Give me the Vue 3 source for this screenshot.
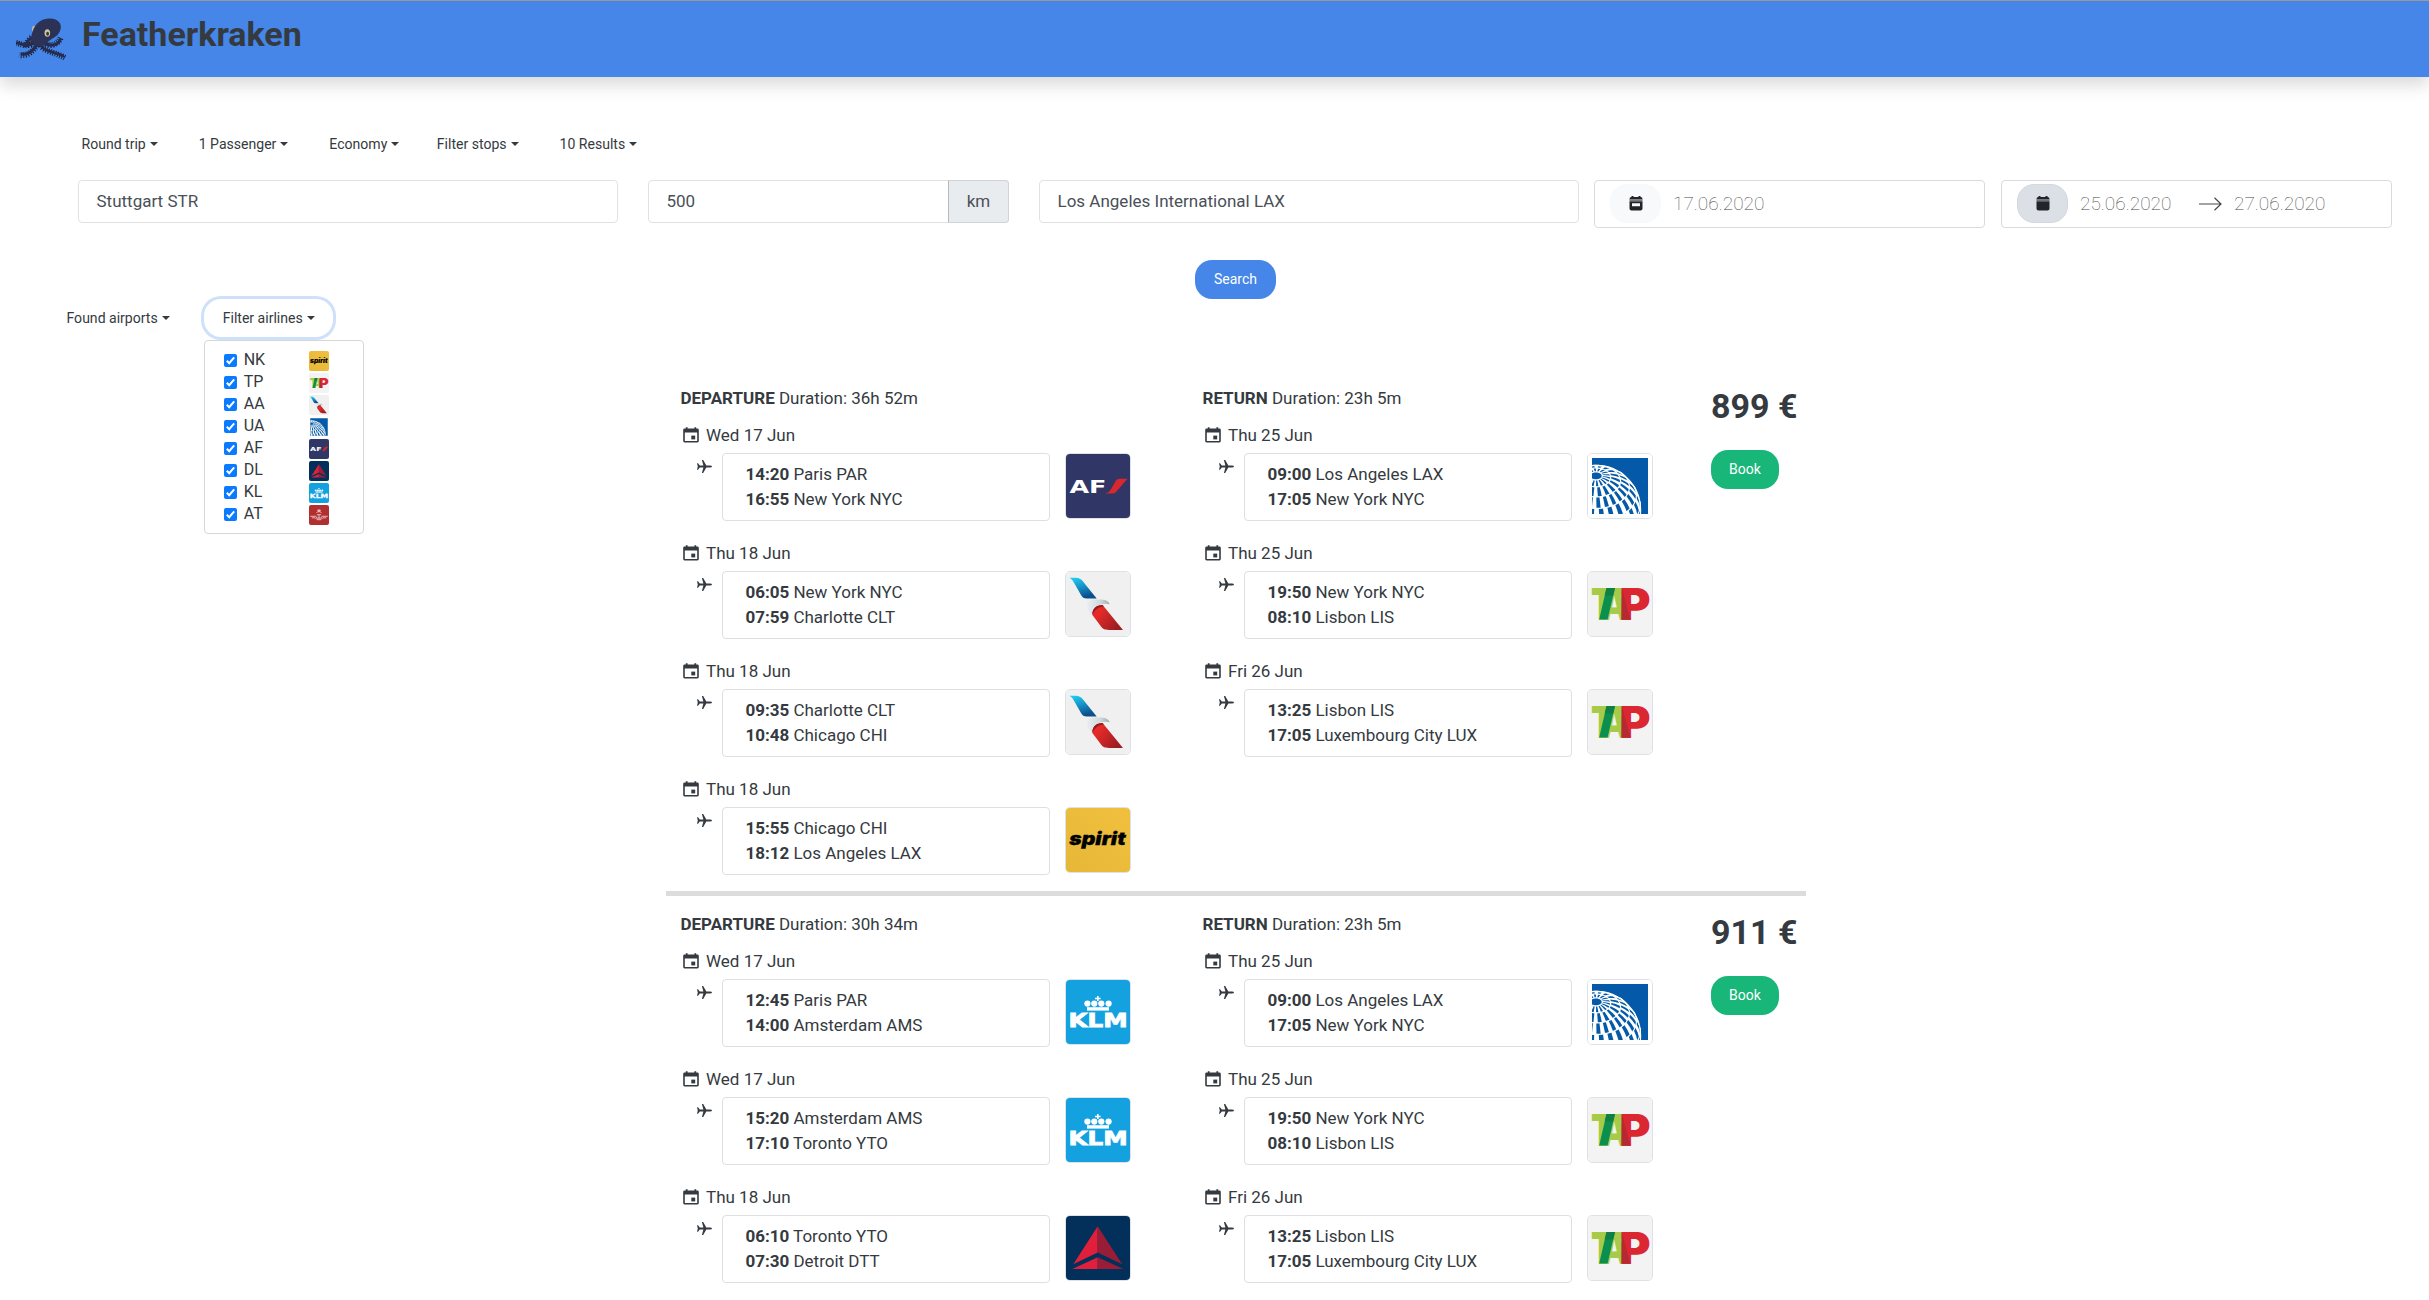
<script setup>
const options = ['Round trip', '1 Passenger', 'Economy', 'Filter stops', '10 Results']
const airlines = ['NK', 'TP', 'AA', 'UA', 'AF', 'DL', 'KL', 'AT']

const leg = (date, dep, from, arr, to, airline) => ({ date, dep, from, arr, to, airline })
const back = [
  leg('Thu 25 Jun', '09:00', 'Los Angeles LAX', '17:05', 'New York NYC', 'UA'),
  leg('Thu 25 Jun', '19:50', 'New York NYC', '08:10', 'Lisbon LIS', 'TP'),
  leg('Fri 26 Jun', '13:25', 'Lisbon LIS', '17:05', 'Luxembourg City LUX', 'TP'),
]
const trips = [
  {
    price: '899 €',
    routes: [
      {
        title: 'DEPARTURE',
        duration: '36h 52m',
        legs: [
          leg('Wed 17 Jun', '14:20', 'Paris PAR', '16:55', 'New York NYC', 'AF'),
          leg('Thu 18 Jun', '06:05', 'New York NYC', '07:59', 'Charlotte CLT', 'AA'),
          leg('Thu 18 Jun', '09:35', 'Charlotte CLT', '10:48', 'Chicago CHI', 'AA'),
          leg('Thu 18 Jun', '15:55', 'Chicago CHI', '18:12', 'Los Angeles LAX', 'NK'),
        ],
      },
      { title: 'RETURN', duration: '23h 5m', legs: back },
    ],
  },
  {
    price: '911 €',
    routes: [
      {
        title: 'DEPARTURE',
        duration: '30h 34m',
        legs: [
          leg('Wed 17 Jun', '12:45', 'Paris PAR', '14:00', 'Amsterdam AMS', 'KL'),
          leg('Wed 17 Jun', '15:20', 'Amsterdam AMS', '17:10', 'Toronto YTO', 'KL'),
          leg('Thu 18 Jun', '06:10', 'Toronto YTO', '07:30', 'Detroit DTT', 'DL'),
        ],
      },
      { title: 'RETURN', duration: '23h 5m', legs: back },
    ],
  },
]

// Globe graticule: orthographic projection of a sphere whose pole is tilted towards the viewer.
const rad = Math.PI / 180
const cx = 8, cy = 56, R = 45
const tilt = 50 * rad
function project(theta, phi) {
  const t = theta * rad, f = phi * rad
  const a = Math.sin(t) * Math.cos(f), b = Math.sin(t) * Math.sin(f), c = Math.cos(t)
  const y = c * Math.sin(tilt) + b * Math.cos(tilt)
  const z = c * Math.cos(tilt) - b * Math.sin(tilt)
  return { x: (cx + R * a).toFixed(1), y: (cy - R * y).toFixed(1), z }
}
const poly = (pts) => 'M' + pts.map((p) => p.x + ' ' + p.y).join('L')
let cells = ''
let rings = ''
const bands = [8, 19, 33, 48, 64, 81, 98]
bands.slice(0, -1).forEach((t0, k) => {
  const t1 = bands[k + 1]
  const step = k < 2 ? 20 : 15
  const w = step * 0.52
  for (let f = -120; f < 120; f += step) {
    const s = f + k * 4
    const m = (t0 + t1) / 2
    const pts = [
      project(t0, s), project(t0, s + w / 2), project(t0, s + w),
      project(m, s + w), project(t1, s + w), project(t1, s + w / 2), project(t1, s), project(m, s),
    ]
    if (pts.every((p) => p.z > -0.02)) cells += poly(pts) + 'Z'
  }
  let run = []
  for (let f = -130; f <= 130; f += 5) {
    const p = project(t0, f)
    if (p.z > 0) run.push(p)
    else if (run.length) { rings += poly(run); run = [] }
  }
  if (run.length) rings += poly(run)
})

const art = {
  AF: `<rect width="64" height="64" fill="#303766"/>
    <text x="3.4" y="39.4" font-family="DejaVu Sans" font-weight="700" font-size="18" fill="#fff" textLength="37" lengthAdjust="spacingAndGlyphs">AF</text>
    <path d="M39.3 39.5C42.5 38.8 43.6 37.5 45.2 34.8L49.3 27.8C50.6 25.6 51.6 24.9 53.6 24.8H61.5L50.4 37.6C49.2 39 48.4 39.5 46.8 39.5Z" fill="#d9272e"/>`,
  AA: `<rect width="64" height="64" fill="#f0f0f0"/>
    <path d="M3.5 5.8H9.5C13 5.8 15 7 17 9.4L30.7 26.6H20.8C18 26.6 16.2 25.4 15 23L9 12.5C7.5 9.5 6 7.5 3.5 5.8Z" fill="url(#g-blue)"/>
    <path d="M26 42.5C22 39.5 20.6 36 21 32C21.5 28.6 24.5 27.6 28 27.6H34C38.5 27.6 42.5 29 43.7 32.2C40.6 31.2 37.5 31.7 34 32.7C29.5 34.2 26 37.5 26 42.5Z" fill="url(#g-beak)"/>
    <path d="M26.4 43C26 37 30 33 36.6 33L57 58H43C38.5 58 36.5 57 34.3 53.6Z" fill="url(#g-red)"/>
    <path d="M26.4 43C26 37 30 33 36.6 33L37.8 34.6C32.5 35 28.5 38 26.4 43Z" fill="#951b20"/>`,
  NK: `<rect width="64" height="64" fill="url(#g-yellow)"/>
    <text x="3.2" y="36.9" font-family="Inter, Roboto" font-weight="900" font-style="italic" font-size="17.6" fill="#000" stroke="#000" stroke-width="0.3" textLength="56.5" lengthAdjust="spacingAndGlyphs">spirit</text>`,
  KL: `<rect width="64" height="64" fill="#13a1df"/>
    <path d="M31 16h1.6v1.7h2v1.6h-2V21H31v-1.7h-2v-1.6h2z" fill="#fff"/>
    <g fill="#fff"><circle cx="21.4" cy="23.6" r="3.1"/><circle cx="28.3" cy="23.6" r="3.1"/><circle cx="35.3" cy="23.6" r="3.1"/><circle cx="42.6" cy="23.6" r="3.1"/><rect x="21" y="27.2" width="22" height="3.4"/></g>
    <text x="2.6" y="47.4" font-family="DejaVu Sans" font-weight="700" font-size="18.6" fill="#fff" stroke="#fff" stroke-width="0.8" textLength="59" lengthAdjust="spacingAndGlyphs">KLM</text>`,
  DL: `<rect width="64" height="64" fill="#03305b"/>
    <path d="M31.7 10.3L7.3 48.2L31.7 36.4ZM31.7 41.3L6.3 53H31.7Z" fill="#e01f3a"/>
    <path d="M31.7 10.3L56.2 48.2L31.7 36.4ZM31.7 41.3L57.4 53H31.7Z" fill="#991d36"/>`,
  UA: `<rect width="64" height="64" fill="#fff"/><rect x="4" y="4" width="56" height="56" fill="#0459a8"/>
    <g clip-path="url(#c-square)"><path d="${cells}" fill="#fff"/><path d="${rings}" fill="none" stroke="#fff" stroke-width="1.2"/>
    <circle cx="8" cy="56" r="44.6" fill="none" stroke="#fff" stroke-width="1.2"/></g>`,
  TP: `<rect width="64" height="64" fill="#f3f3f3"/>
    <g font-family="Inter, Roboto" font-weight="900" font-size="43.5">
    <text x="3" y="47.6" fill="#a5cb48" textLength="22" lengthAdjust="spacingAndGlyphs">T</text>
    <text x="12" y="47.6" fill="#a5cb48" textLength="29" lengthAdjust="spacingAndGlyphs">A</text>
    <path d="M20 16H34V23H20Z" fill="#a5cb48"/>
    <path d="M18.5 16H27L19.6 47.6H11.2Z" fill="#0b8f4e"/>
    <path d="M18.5 16H27L25.2 23.6H16.6Z" fill="#0f7f46"/>
    <text x="31.6" y="47.6" fill="#da2731" textLength="31" lengthAdjust="spacingAndGlyphs">P</text>
    <path d="M33.7 16L42.3 47.6H33.4Z" fill="#b52a30"/></g>`,
  AT: `<rect width="64" height="64" fill="#b22f30"/>
    <g fill="none" stroke="#e9c3c3" stroke-width="3"><path d="M4 36H22L26 42H38L42 36H60M9 41H20L26 47H38L44 41H55"/>
    <path d="M32 13V24M26 17H38M24 24L32 20L40 24M25 31H39M32 31V44"/></g>`,
}
</script>

<template>
  <div class="page">
    <svg class="defs" width="0" height="0" aria-hidden="true">
      <defs>
        <linearGradient id="g-blue" x1="0" y1="0" x2="0.4" y2="1">
          <stop offset="0" stop-color="#1fd3f7" /><stop offset="0.5" stop-color="#1795c8" /><stop offset="1" stop-color="#0b4f8c" />
        </linearGradient>
        <linearGradient id="g-red" x1="0" y1="0" x2="1" y2="0.6">
          <stop offset="0.3" stop-color="#e42b28" /><stop offset="1" stop-color="#9c1d22" />
        </linearGradient>
        <linearGradient id="g-beak" x1="0" y1="0" x2="1" y2="0">
          <stop offset="0" stop-color="#e9eef1" /><stop offset="0.6" stop-color="#cfd8dc" /><stop offset="1" stop-color="#9aa9b1" />
        </linearGradient>
        <linearGradient id="g-yellow" x1="1" y1="0" x2="0" y2="1">
          <stop offset="0" stop-color="#f0c03d" /><stop offset="1" stop-color="#e7b739" />
        </linearGradient>
        <clipPath id="c-square"><rect x="4" y="4" width="56" height="56" /></clipPath>
      </defs>
      <symbol id="ico-cal" viewBox="0 0 16 16">
        <path d="M2.8 0.2H4.6V1.5H11.4V0.2H13.2V1.5H14.4Q15.8 1.5 15.8 2.9V14.1Q15.8 15.5 14.4 15.5H1.6Q0.2 15.5 0.2 14.1V2.9Q0.2 1.5 1.6 1.5H2.8ZM1.8 5.4V13.9H14.2V5.4Z" fill-rule="evenodd" fill="#343a40" />
        <rect x="8.3" y="8.6" width="3.9" height="3.8" fill="#343a40" />
      </symbol>
      <symbol id="ico-plane" viewBox="0 0 15 13">
        <path d="M0 3.2H1L2.8 5.5H6.4L4.9 0H6.2L9.3 5.5H13Q15 5.7 15 6.5T13 7.5H9.3L6.2 13H4.9L6.4 7.5H2.8L1 9.8H0L0.8 6.5Z" fill="#343a40" />
      </symbol>
    </svg>

    <header class="topbar">
      <svg class="kraken" viewBox="0 0 50 42" width="50" height="42">
        <g fill="none">
          <g stroke="#151a2c" stroke-width="6" stroke-dasharray="0.9 1.5">
            <path d="M20 21C15 30 8 27 0 25" /><path d="M22 25C17 34 12 38 3 37" /><path d="M24 25C26 34 40 34 49 40" /><path d="M26 23C34 30 42 27 45 19" /><path d="M20 19C14 19 12 22 9 30" />
          </g>
          <g stroke="#272c4e" stroke-width="3" stroke-linecap="round">
            <path d="M20 21C15 30 8 27 2 25" /><path d="M22 25C17 34 12 37 6 36" /><path d="M24 25C26 34 40 34 47 38" /><path d="M26 23C34 30 42 27 44 22" /><path d="M20 19C14 19 12 22 9 28" />
          </g>
        </g>
        <ellipse cx="18" cy="11" rx="2" ry="3.2" fill="#b9b7a6" />
        <path d="M15 22C16 12 20 1 33 0.5C42 0 47 6 44 13C41 20 35 20 31 25C27 30 17 29 15 22Z" fill="#2c3156" />
        <ellipse cx="31.3" cy="15" rx="2.8" ry="3.8" fill="#c9c5a8" />
        <ellipse cx="31.6" cy="15.8" rx="1.4" ry="2" fill="#3f371c" />
      </svg>
      <h1>Featherkraken</h1>
    </header>

    <main>
      <nav class="options">
        <button v-for="o in options" :key="o" class="toggle">{{ o }}<i class="caret"></i></button>
      </nav>

      <form class="search">
        <div class="field place">Stuttgart STR</div>
        <div class="field radius"><span>500</span><span class="unit">km</span></div>
        <div class="field place to">Los Angeles International LAX</div>
        <div class="dates">
          <span class="pill">
            <svg width="14" height="15" viewBox="0 0 14 15"><path d="M2.5 0H4.5V1H9.5V0H11.5V1Q13.5 1 13.5 3V3.6H0.5V3Q0.5 1 2.5 1ZM0.5 5.2H13.5V12.5Q13.5 14.5 11.5 14.5H2.5Q0.5 14.5 0.5 12.5ZM3 7.2V10.2H11V7.2Z" fill="#212529" /><rect x="0.5" y="3.6" width="13" height="1.6" fill="#777b7e" /></svg>
          </span>
          <span class="date">17.06.2020</span>
        </div>
        <div class="dates range">
          <span class="pill active">
            <svg width="14" height="15" viewBox="0 0 14 15"><path d="M2.5 0H4.5V1H9.5V0H11.5V1Q13.5 1 13.5 3V3.6H0.5V3Q0.5 1 2.5 1ZM0.5 5.2H13.5V12.5Q13.5 14.5 11.5 14.5H2.5Q0.5 14.5 0.5 12.5Z" fill="#212529" /><rect x="0.5" y="3.6" width="13" height="1.6" fill="#6d7276" /></svg>
          </span>
          <span class="date">25.06.2020</span>
          <svg class="arrow" width="23" height="14" viewBox="0 0 23 14"><path d="M0 7H22M15.5 0.8L22 7L15.5 13.2" fill="none" stroke="#484848" stroke-width="1.2" /></svg>
          <span class="date">27.06.2020</span>
        </div>
      </form>

      <div class="submit"><button class="solid primary">Search</button></div>

      <div class="filters">
        <button class="toggle">Found airports<i class="caret"></i></button>
        <div class="dropdown">
          <button class="toggle focused">Filter airlines<i class="caret"></i></button>
          <ul class="menu">
            <li v-for="a in airlines" :key="a">
              <svg class="check" width="13" height="13" viewBox="0 0 13 13"><rect width="13" height="13" rx="2" fill="#0a7aff" /><path d="M2.8 6.8L5.2 9.2L10.2 3.4" fill="none" stroke="#fff" stroke-width="2" /></svg>
              <span>{{ a }}</span>
              <svg class="mini" width="20" height="20" viewBox="0 0 64 64" v-html="art[a]"></svg>
            </li>
          </ul>
        </div>
      </div>

      <section class="results">
        <article v-for="trip in trips" :key="trip.price" class="trip">
          <div v-for="r in trip.routes" :key="r.title" class="route">
            <h2><b>{{ r.title }}</b> Duration: {{ r.duration }}</h2>
            <div v-for="(l, i) in r.legs" :key="i" class="leg">
              <div class="day"><svg width="16" height="16"><use href="#ico-cal" /></svg>{{ l.date }}</div>
              <div class="flight">
                <svg class="plane" width="15" height="13"><use href="#ico-plane" /></svg>
                <div class="times">
                  <div><b>{{ l.dep }}</b> {{ l.from }}</div>
                  <div><b>{{ l.arr }}</b> {{ l.to }}</div>
                </div>
                <div class="logo"><svg width="64" height="64" viewBox="0 0 64 64" v-html="art[l.airline]"></svg></div>
              </div>
            </div>
          </div>
          <div class="buy">
            <strong>{{ trip.price }}</strong>
            <button class="solid book">Book</button>
          </div>
        </article>
      </section>
    </main>
  </div>
</template>

<style>
body {
  margin: 0;
  background: #fff;
}
</style>

<style scoped>
.page {
  width: 2429px;
  height: 1300px;
  overflow: hidden;
  box-sizing: border-box;
  font-family: Roboto, sans-serif;
  font-size: 17px;
  color: #343a40;
}
.page * {
  box-sizing: border-box;
}
.defs {
  position: absolute;
}
svg {
  display: block;
  flex: none;
}
button {
  font: inherit;
  border: 0;
  background: none;
  color: inherit;
  margin: 0;
}
.topbar {
  display: flex;
  height: 77px;
  border-top: 1px solid #999;
  background: #4586e8;
  box-shadow: 0 8px 16px rgba(0, 0, 0, 0.15);
}
.kraken {
  margin: 17px 0 0 16px;
}
h1 {
  margin: 13px 0 0 16px;
  font-size: 34px;
  line-height: 40px;
  font-weight: 700;
}
.options {
  display: flex;
  gap: 41px;
  height: 20px;
  margin: 57px 0 0 81.5px;
}
.options .toggle:nth-child(4) {
  margin-left: -3.5px;
}
.toggle {
  display: flex;
  align-items: center;
  padding: 0;
  font-size: 14.05px;
  line-height: 20px;
  white-space: nowrap;
}
.caret {
  margin-left: 4px;
  border: 4px solid transparent;
  border-top-color: #343a40;
  border-bottom: 0;
}
.search {
  display: flex;
  align-items: flex-start;
  margin: 26px 0 0 78px;
}
.field {
  height: 43px;
  border: 1px solid #dfe2e5;
  border-radius: 4px;
  padding-left: 17.5px;
  line-height: 41px;
  color: #495057;
}
.place {
  width: 540px;
}
.radius {
  display: flex;
  justify-content: space-between;
  width: 361px;
  margin: 0 30px;
}
.unit {
  width: 61px;
  margin: -1px;
  border: 1px solid #ced4da;
  border-left-color: #b4babf;
  border-radius: 0 4px 4px 0;
  background: #e9ecef;
  text-align: center;
}
.dates {
  display: flex;
  align-items: center;
  width: 391px;
  height: 48px;
  margin-left: 15px;
  border: 1px solid #dbdbdb;
  border-radius: 4px;
  padding: 0 0 1px 15px;
}
.range {
  margin-left: 16px;
}
.pill {
  display: flex;
  align-items: center;
  justify-content: center;
  width: 51px;
  height: 39px;
  margin-right: 12px;
  border-radius: 17px;
  background: #f8f9fa;
}
.pill.active {
  background: #dae0e5;
  border: 1px solid #d3d9df;
}
.date {
  width: 92px;
  font-size: 19px;
  font-weight: 100;
  line-height: 24px;
  color: #484848;
}
.arrow {
  margin: 0 12px 0 27px;
}
.submit {
  display: flex;
  margin: 32px 0 0 1195px;
}
.solid {
  height: 39px;
  padding: 0 0 1px;
  border-radius: 17px;
  color: #fff;
  font-size: 14px;
}
.primary {
  width: 81px;
  background: #4586e8;
}
.filters {
  display: flex;
  height: 39px;
  margin-left: 66.5px;
}
.dropdown {
  position: relative;
  margin-left: 34px;
}
.filters > .toggle {
  height: 38px;
}
.focused {
  width: 129px;
  height: 38px;
  padding-left: 19px;
  border-radius: 17px;
  box-shadow: 0 0 0 3px #cfe0fa;
}
.menu {
  position: absolute;
  left: 0;
  top: 41px;
  width: 160px;
  height: 194px;
  margin: 0;
  padding: 8px 0 0 19px;
  list-style: none;
  border: 1px solid #d6d7d9;
  border-radius: 4px;
  background: #fff;
}
.menu li {
  display: flex;
  align-items: center;
  height: 22px;
  font-size: 16px;
  line-height: 22px;
}
.check {
  margin-right: 7px;
}
.menu span {
  width: 65px;
}
.mini {
  border-radius: 2px;
  margin-top: 1px;
}
.results {
  width: 1140px;
  margin: 32px 0 0 666px;
}
.trip {
  display: flex;
  padding: 15px 0 16px 15px;
}
.trip + .trip {
  border-top: 5px solid #dcdcdc;
}
.route {
  width: 522px;
}
h2 {
  margin: 0 0 11px -0.5px;
  font-size: inherit;
  font-weight: 400;
  line-height: 26px;
}
.leg + .leg {
  margin-top: 19px;
}
.day {
  display: flex;
  align-items: center;
  gap: 7px;
  height: 26px;
  padding-left: 2px;
}
.flight {
  display: flex;
  margin-top: 5px;
}
.plane {
  margin: 7px 10px 0 16px;
}
.times {
  width: 328px;
  height: 68px;
  padding: 8px 0 0 22.4px;
  border: 1px solid #dedfe0;
  border-radius: 4px;
  line-height: 25px;
}
.logo {
  width: 66px;
  height: 66px;
  margin-left: 15px;
  border: 1px solid #dee2e6;
  border-radius: 5px;
  overflow: hidden;
}
.buy {
  margin-left: -14px;
}
.buy strong {
  display: block;
  margin-top: 1px;
  font-size: 34px;
  line-height: 40px;
}
.book {
  display: block;
  width: 68px;
  margin-top: 24px;
  background: #19b67a;
}
</style>
